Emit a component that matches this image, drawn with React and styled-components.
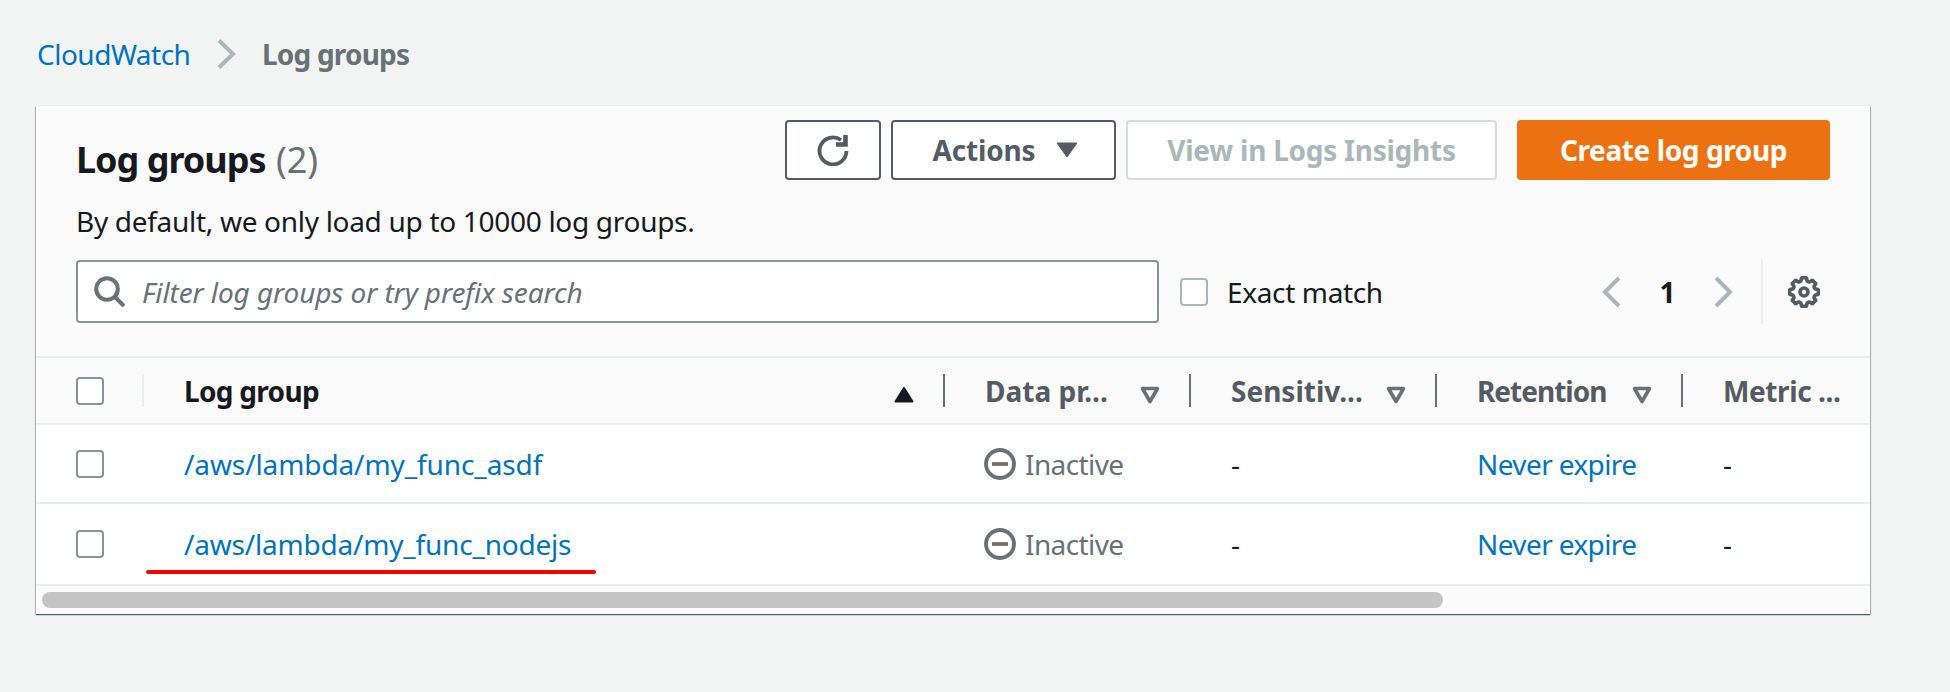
import React from "react";
import styled, { createGlobalStyle } from "styled-components";

const GlobalStyle = createGlobalStyle`
  html, body {
    margin: 0;
    padding: 0;
    background: #f2f3f3;
  }
  body {
    font-family: "Noto Sans", "Open Sans", sans-serif;
    font-size: 28px;
    color: #16191f;
  }
  * { box-sizing: border-box; }
`;

const columns = "106px 801px 246px 246px 246px 189px";

const rows = [
  { name: "/aws/lambda/my_func_asdf", height: 77, track: -0.1 },
  { name: "/aws/lambda/my_func_nodejs", height: 80, track: -0.2, marked: true },
];

const headers = [
  { label: "Data pr...", track: 0 },
  { label: "Sensitiv...", track: 0 },
  { label: "Retention", track: -1 },
  { label: "Metric ...", track: -0.4, noSort: true },
];

// gear outline, 8 teeth
function gearPath() {
  const pts = [];
  const teeth = 8;
  for (let i = 0; i < teeth; i++) {
    const a = (i / teeth) * Math.PI * 2 - Math.PI / 2;
    const step = (Math.PI * 2) / teeth;
    [
      [a - step * 0.36, 11.4],
      [a - step * 0.2, 14.4],
      [a + step * 0.2, 14.4],
      [a + step * 0.36, 11.4],
    ].forEach(([t, r]) => pts.push([16 + Math.cos(t) * r, 16 + Math.sin(t) * r]));
  }
  return "M" + pts.map((p) => p[0].toFixed(2) + " " + p[1].toFixed(2)).join("L") + "Z";
}

export default function App() {
  return (
    <Page>
      <GlobalStyle />
      <Breadcrumb>
        <CrumbLink>CloudWatch</CrumbLink>
        <Chevron width="19" height="30" viewBox="0 0 19 30" color="#aab7b8">
          <path d="M2 1.5l14 13.5L2 28.5" />
        </Chevron>
        <CrumbCurrent>Log groups</CrumbCurrent>
      </Breadcrumb>

      <Card>
        <CardHeader>
          <TitleRow>
            <Title>
              Log groups <Count>(2)</Count>
            </Title>
            <Actions>
              <IconButton aria-label="Refresh">
                <svg width="32" height="32" viewBox="0 0 32 32" fill="none" stroke="#545b64" strokeWidth="3.8">
                  <path d="M29.5 17A13.5 13.5 0 1 1 24 6" />
                  <path d="M28.5 1v9.5H19" strokeWidth="4.6" />
                </svg>
              </IconButton>
              <OutlineButton>
                <ButtonText $track={-0.15}>Actions</ButtonText>
                <svg width="22" height="16" viewBox="0 0 22 16">
                  <path d="M1 1h20L11 15z" fill="#545b64" stroke="#545b64" strokeLinejoin="round" />
                </svg>
              </OutlineButton>
              <DisabledButton disabled>
                <ButtonText $track={-0.25}>View in Logs Insights</ButtonText>
              </DisabledButton>
              <PrimaryButton>
                <ButtonText $track={-0.4}>Create log group</ButtonText>
              </PrimaryButton>
            </Actions>
          </TitleRow>
          <Description>By default, we only load up to 10000 log groups.</Description>
          <FilterRow>
            <SearchBox>
              <svg width="31" height="31" viewBox="0 0 31 31" fill="none" stroke="#687078" strokeWidth="4">
                <circle cx="13" cy="13" r="10.8" />
                <path d="M20.5 20.5l9.5 9.5" />
              </svg>
              <SearchInput placeholder="Filter log groups or try prefix search" />
            </SearchBox>
            <Box light />
            <ExactLabel>Exact match</ExactLabel>
            <Pagination>
              <Chevron width="19" height="32" viewBox="0 0 19 32" color="#aab7b8">
                <path d="M17 2L3 16l14 14" />
              </Chevron>
              <PageNumber>1</PageNumber>
              <Chevron width="19" height="32" viewBox="0 0 19 32" color="#aab7b8">
                <path d="M2 2l14 14L2 30" />
              </Chevron>
              <PageDivider />
              <svg width="32" height="32" viewBox="0 0 32 32" fill="none" stroke="#545b64" strokeWidth="3.6" strokeLinejoin="round">
                <path d={gearPath()} />
                <circle cx="16" cy="16" r="4" />
              </svg>
            </Pagination>
          </FilterRow>
        </CardHeader>

        <HeadRow>
          <CheckCell>
            <Box />
          </CheckCell>
          <HeadCell>
            <Resizer light />
            <HeadLabel dark $track={-0.7}>Log group</HeadLabel>
            <SortIcon>
              <path d="M10 2L18.5 15.5H1.5z" fill="#16191f" stroke="#16191f" strokeWidth="2" strokeLinejoin="round" />
            </SortIcon>
          </HeadCell>
          {headers.map((h) => (
            <HeadCell key={h.label}>
              <Resizer />
              <HeadLabel $track={h.track}>{h.label}</HeadLabel>
              {!h.noSort && (
                <SortIcon>
                  <path d="M2.5 2.5h15L10 15.5z" fill="none" stroke="#687078" strokeWidth="3.6" strokeLinejoin="round" />
                </SortIcon>
              )}
            </HeadCell>
          ))}
        </HeadRow>

        {rows.map((row) => (
          <BodyRow key={row.name} $height={row.height}>
            <CheckCell>
              <Box />
            </CheckCell>
            <Cell>
              <TextLink $track={row.track}>{row.name}</TextLink>
              {row.marked && <RedLine />}
            </Cell>
            <Cell $icon>
              <svg width="32" height="32" viewBox="0 0 32 32" fill="none" stroke="#687078" strokeWidth="3.8">
                <circle cx="16" cy="16" r="14" />
                <path d="M8 16h16" />
              </svg>
              <Status>Inactive</Status>
            </Cell>
            <Cell>-</Cell>
            <Cell>
              <TextLink $track={-0.6}>Never expire</TextLink>
            </Cell>
            <Cell>-</Cell>
          </BodyRow>
        ))}

        <ScrollTrack>
          <ScrollThumb />
        </ScrollTrack>
      </Card>
    </Page>
  );
}

const Page = styled.div`
  width: 1950px;
  height: 692px;
  padding-left: 36px;
  overflow: hidden;
`;

const Breadcrumb = styled.nav`
  display: flex;
  align-items: center;
  height: 40px;
  margin-top: 34px;
`;

const CrumbLink = styled.a`
  color: #0073bb;
  width: 181px;
  padding-left: 1px;
  letter-spacing: -0.5px;
`;

const CrumbCurrent = styled.span`
  color: #687078;
  font-weight: 700;
  margin-left: 26px;
  letter-spacing: -0.8px;
`;

const Chevron = styled.svg`
  fill: none;
  stroke: ${(p) => p.color};
  stroke-width: 4px;
  flex: none;
`;

const Card = styled.section`
  width: 1834px;
  margin-top: 32px;
  background: #fafafa;
  box-shadow: 0 1px 1px 0 rgba(0, 28, 36, 0.5), 1px 1px 1px 0 rgba(0, 28, 36, 0.2),
    -1px 1px 1px 0 rgba(0, 28, 36, 0.2), 0 0 1px 0 rgba(0, 28, 36, 0.15);
`;

const CardHeader = styled.header`
  padding: 14px 40px 33px 40px;
  border-bottom: 2px solid #eaeded;
`;

const TitleRow = styled.div`
  display: flex;
  justify-content: space-between;
  height: 62px;
`;

const Title = styled.h1`
  margin: 20px 0 0;
  font-size: 36px;
  line-height: 40px;
  font-weight: 700;
  letter-spacing: -1px;
`;

const Count = styled.span`
  color: #687078;
  font-weight: 400;
  letter-spacing: 0;
  margin-left: 2px;
`;

const Actions = styled.div`
  display: flex;
  gap: 10px;
  height: 60px;
`;

const BaseButton = styled.button`
  height: 60px;
  border-radius: 4px;
  font-family: inherit;
  font-size: 28px;
  font-weight: 700;
  padding: 0;
  display: flex;
  align-items: center;
  justify-content: center;
  background: #fff;
`;

const ButtonText = styled.span`
  letter-spacing: ${(p) => p.$track}px;
`;

const IconButton = styled(BaseButton)`
  width: 96px;
  border: 2px solid #545b64;
`;

const OutlineButton = styled(BaseButton)`
  width: 225px;
  gap: 20px;
  padding-left: 3px;
  border: 2px solid #545b64;
  color: #545b64;
`;

const DisabledButton = styled(BaseButton)`
  width: 371px;
  border: 2px solid #d5dbdb;
  color: #aab7b8;
`;

const PrimaryButton = styled(BaseButton)`
  width: 313px;
  margin-left: 10px;
  border: none;
  background: #ec7211;
  color: #fff;
`;

const Description = styled.p`
  margin: 21px 0 0;
  line-height: 36px;
  letter-spacing: -0.3px;
`;

const FilterRow = styled.div`
  display: flex;
  align-items: center;
  height: 63px;
  margin-top: 21px;
`;

const SearchBox = styled.div`
  display: flex;
  align-items: center;
  gap: 17px;
  width: 1083px;
  height: 63px;
  padding-left: 16px;
  margin-right: 21px;
  background: #fff;
  border: 2px solid #879596;
  border-radius: 4px;
`;

const SearchInput = styled.input`
  flex: 1;
  min-width: 0;
  border: none;
  outline: none;
  background: transparent;
  padding: 0;
  font-family: inherit;
  font-size: 28px;
  font-style: italic;
  letter-spacing: -0.1px;
  &::placeholder {
    color: #687078;
    opacity: 1;
  }
`;

const Box = styled.span`
  display: block;
  flex: none;
  width: 28px;
  height: 28px;
  background: #fff;
  border-radius: 4px;
  border: 2px solid ${(p) => (p.light ? "#aab7b8" : "#879596")};
`;

const ExactLabel = styled.span`
  margin-left: 19px;
  letter-spacing: -0.35px;
`;

const Pagination = styled.div`
  display: flex;
  align-items: center;
  margin-left: auto;
  margin-right: 10px;
`;

const PageNumber = styled.span`
  font-weight: 700;
  width: 93px;
  text-align: center;
`;

const PageDivider = styled.span`
  width: 2px;
  height: 65px;
  margin: 0 25px 0 28px;
  background: #eaeded;
`;

const HeadRow = styled.div`
  display: grid;
  grid-template-columns: ${columns};
  height: 67px;
  border-bottom: 2px solid #eaeded;
`;

const CheckCell = styled.div`
  display: flex;
  align-items: center;
  padding-left: 40px;
`;

const HeadCell = styled.div`
  display: flex;
  align-items: center;
  padding-right: 29px;
  min-width: 0;
`;

const Resizer = styled.span`
  flex: none;
  width: 2px;
  height: 33px;
  margin-right: 40px;
  background: ${(p) => (p.light ? "#eaeded" : "#687078")};
`;

const HeadLabel = styled.span`
  font-weight: 700;
  white-space: nowrap;
  letter-spacing: ${(p) => p.$track}px;
  color: ${(p) => (p.dark ? "#16191f" : "#545b64")};
`;

const SortIcon = styled.svg.attrs({ width: 20, height: 18, viewBox: "0 0 20 18" })`
  flex: none;
  margin-left: auto;
  margin-top: 8px;
`;

const BodyRow = styled.div`
  display: grid;
  grid-template-columns: ${columns};
  height: ${(p) => p.$height + 2}px;
  background: #fff;
  border-bottom: 2px solid #eaeded;
`;

const Cell = styled.div`
  position: relative;
  display: flex;
  align-items: center;
  gap: 9px;
  padding-left: ${(p) => (p.$icon ? 41 : 42)}px;
  white-space: nowrap;
`;

const TextLink = styled.a`
  color: #0073bb;
  letter-spacing: ${(p) => p.$track}px;
`;

const Status = styled.span`
  color: #687078;
  letter-spacing: -0.6px;
`;

const RedLine = styled.span`
  position: absolute;
  left: 4px;
  bottom: 10px;
  width: 450px;
  height: 4px;
  border-radius: 2px;
  background: #f60000;
`;

const ScrollTrack = styled.div`
  height: 28px;
  padding: 6px;
`;

const ScrollThumb = styled.div`
  width: 1401px;
  height: 16px;
  border-radius: 8px;
  background: #c4c4c4;
`;
